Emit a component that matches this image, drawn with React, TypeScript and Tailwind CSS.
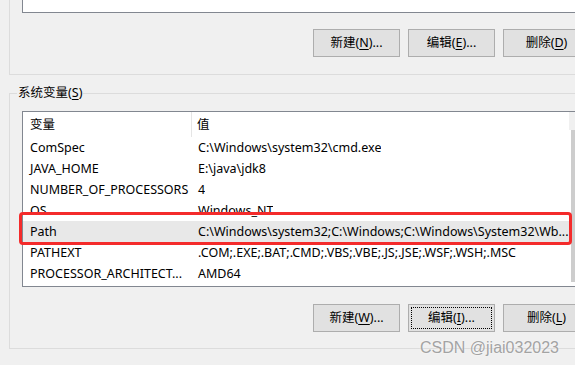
import React from "react";

type Row = { name: string; value: string; selected?: boolean };

const rows: Row[] = [
	{ name: "ComSpec", value: "C:\\Windows\\system32\\cmd.exe" },
	{ name: "JAVA_HOME", value: "E:\\java\\jdk8" },
	{ name: "NUMBER_OF_PROCESSORS", value: "4" },
	{ name: "OS", value: "Windows_NT" },
	{
		name: "Path",
		value: "C:\\Windows\\system32;C:\\Windows;C:\\Windows\\System32\\Wb...",
		selected: true,
	},
	{ name: "PATHEXT", value: ".COM;.EXE;.BAT;.CMD;.VBS;.VBE;.JS;.JSE;.WSF;.WSH;.MSC" },
	{ name: "PROCESSOR_ARCHITECT...", value: "AMD64" },
];

const Btn = ({ label, k, tail, focused }: { label: string; k: string; tail: string; focused?: boolean }) => (
	<div className="w-[87px] h-[28px] shrink-0 border border-[#adadad] bg-[#e1e1e1] p-[2px]">
		<div
			className={`w-full h-full flex items-center justify-center whitespace-nowrap ${
				focused ? "border border-dotted border-black" : "border border-transparent"
			}`}
		>
			{label}(<u className="underline-offset-2">{k}</u>){tail}
		</div>
	</div>
);

const ButtonRow = ({ keys, focusEdit }: { keys: [string, string, string]; focusEdit?: boolean }) => (
	<div className="flex gap-[8px] pl-[303px]">
		<Btn label="新建" k={keys[0]} tail="..." />
		<Btn label="编辑" k={keys[1]} tail="..." focused={focusEdit} />
		<Btn label="删除" k={keys[2]} tail="" />
	</div>
);

export default function App() {
	return (
		<div className="relative w-[575px] h-[365px] overflow-hidden bg-[#f0f0f0] text-black text-[12.5px] leading-[16px] font-['Noto_Sans','Noto_Sans_CJK_SC',sans-serif]">
			{/* user variables group (cut off at top) */}
			<div className="ml-[9px] w-[600px] h-[75px] border-l border-b border-[#dcdcdc]">
				<div className="ml-[12px] h-[13px] bg-white border-l border-b border-[#828790]" />
				<div className="mt-[16px]">
					<ButtonRow keys={["N", "E", "D"]} />
				</div>
			</div>

			{/* system variables group */}
			<div className="mt-[18px] ml-[9px] w-[600px] h-[256px] border-l border-t border-b border-[#dcdcdc]">
				<div className="-mt-[9px] ml-[7px] h-[16px] w-fit px-[1px] bg-[#f0f0f0]">
					系统变量(<u className="underline-offset-2">S</u>)
				</div>
				<div className="mt-[10px] ml-[12px] h-[176px] bg-white border border-[#828790] flex">
					<div className="w-[546px] shrink-0 flex flex-col">
						<div className="h-[25px] flex items-center">
							<div className="w-[169px] h-full flex items-center pl-[7px] border-r border-[#e5e5e5]">变量</div>
							<div className="pl-[5px]">值</div>
						</div>
						{rows.map((r) => (
							<div
								key={r.name}
								className={`h-[21px] flex items-center whitespace-nowrap ${r.selected ? "bg-[#e8e8e8]" : ""}`}
							>
								<div className="w-[169px] pl-[7px] overflow-hidden">{r.name}</div>
								<div className="pl-[6px] overflow-hidden">{r.value}</div>
							</div>
						))}
					</div>
					<div className="w-[17px] shrink-0 flex flex-col bg-white">
						<div className="h-[18px] bg-[#f0f0f0]" />
						<div className="ml-[2px] h-[152px] bg-[#cdcdcd]" />
					</div>
				</div>
				<div className="mt-[17px]">
					<ButtonRow keys={["W", "I", "L"]} focusEdit />
				</div>
			</div>

			{/* annotation */}
			<div className="absolute left-[19px] top-[212px] w-[553px] h-[33px] border-[3px] border-[#f42b2b] rounded-[4px]" />

			{/* watermark */}
			<div className="absolute left-[420px] top-[340px] text-[16px] leading-[16px] text-[#a3a3a3] font-['Liberation_Sans',sans-serif] whitespace-nowrap [text-shadow:0_0_2px_white]">
				CSDN @jiai032023
			</div>
		</div>
	);
}
